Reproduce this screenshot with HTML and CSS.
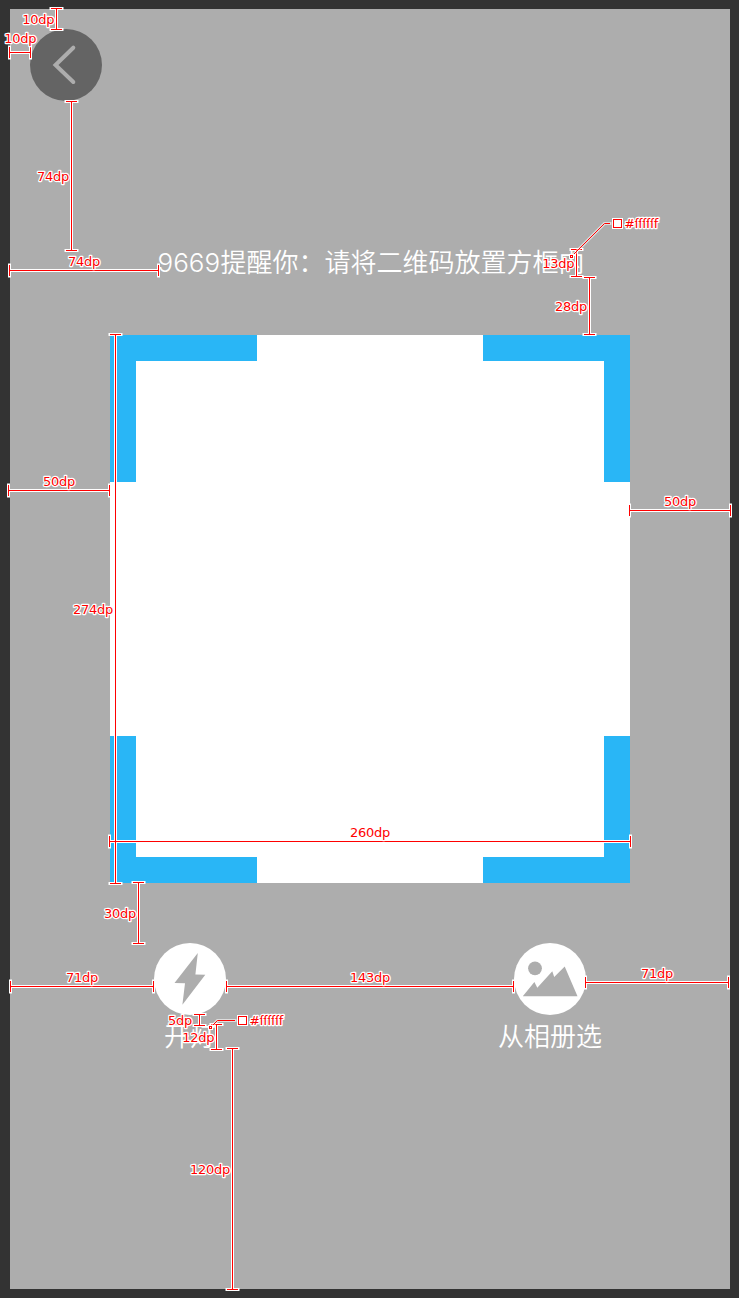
FILE: index.html
```html
<!DOCTYPE html>
<html lang="zh-CN">
<head>
<meta charset="utf-8">
<title>扫描二维码</title>
<link rel="stylesheet" href="styles.css">
</head>
<body>
<main class="phone">
  <button class="round back" aria-label="返回">
    <svg viewBox="0 0 72 72"><path class="chevron" d="M43.3 18.7 25.5 36 43.3 53"/></svg>
  </button>
  <h1 class="tip"><span class="digits">9669</span>提醒你：请将二维码放置方框内</h1>
  <section class="scanner">
    <i class="corner tl"></i><i class="corner tr"></i>
    <i class="corner bl"></i><i class="corner br"></i>
  </section>
  <nav class="actions">
    <div class="action">
      <button class="round light" aria-label="开灯">
        <svg viewBox="0 0 72 72"><path class="glyph" d="M43.8 10 41.4 31.4 51.3 31.7 28.4 61.7 31 40.3 20.5 40Z"/></svg>
      </button>
      <span>开灯</span>
    </div>
    <div class="action">
      <button class="round light" aria-label="从相册选">
        <svg viewBox="0 0 72 72"><circle class="glyph" cx="21" cy="25.3" r="6.9"/><path class="glyph" d="M8.8 53.2 20.4 39 23.3 44.8 38.3 28.3 40.2 34 50.7 23.4 63.5 53.2Z"/></svg>
      </button>
      <span>从相册选</span>
    </div>
  </nav>
</main>
<svg class="specs" viewBox="0 0 739 1298">
  <defs>
    <path id="rules" d="M56.5 8.5V29.5M51 8.5h11M51 29.5h11
      M9.5 52.5H30.5M9.5 47v11M30.5 47v11
      M71.5 101.5V250.5M66 101.5h11M66 250.5h11
      M9.5 270.5H158.5M9.5 265v11M158.5 265v11
      M576.5 249.5V276.5M571 249.5h11M571 276.5h11
      M589.5 277.5V334.5M584 277.5h11M584 334.5h11
      M115.5 334.5V883.5M110 334.5h11M110 883.5h11
      M8.5 490.5H109.5M8.5 485v11M109.5 485v11
      M629.5 510.5H730.5M629.5 505v11M730.5 505v11
      M109.5 841.5H630.5M109.5 836v11M630.5 836v11
      M138.5 882.5V943.5M133 882.5h11M133 943.5h11
      M10.5 986.5H153.5M10.5 981v11M153.5 981v11
      M226.5 986.5H513.5M226.5 981v11M513.5 981v11
      M585.5 982.5H728.5M585.5 977v11M728.5 977v11
      M199.5 1014.5V1025.5M194 1014.5h11M194 1025.5h11
      M216.5 1024.5V1049.5M211 1024.5h11M211 1049.5h11
      M232.5 1048.5V1289.5M227 1048.5h11M227 1289.5h11"/>
    <path id="leaders" d="M610 223.5H604.5L572.5 255.5M235 1020.5H217.5L211.5 1026.5"/>
  </defs>
  <use href="#rules" class="halo"/><use href="#rules" class="line"/>
  <use href="#leaders" class="halo soft"/><use href="#leaders" class="line"/>
  <g class="swatches">
    <rect x="613.5" y="219.5" width="8" height="8"/><rect x="570.5" y="255.5" width="2" height="2"/>
    <rect x="238.5" y="1016.5" width="8" height="8"/><rect x="209.5" y="1026.5" width="2" height="2"/>
  </g>
  <g class="labels">
    <text x="38.3" y="24">10dp</text><text x="20.3" y="43">10dp</text>
    <text x="53" y="181">74dp</text><text x="84" y="266">74dp</text>
    <text x="558.2" y="268">13dp</text><text x="571" y="311">28dp</text>
    <text x="93" y="614">274dp</text><text x="59" y="486">50dp</text>
    <text x="680" y="506">50dp</text><text x="370" y="837">260dp</text>
    <text x="120" y="918">30dp</text><text x="82" y="982">71dp</text>
    <text x="370" y="982">143dp</text><text x="657" y="978">71dp</text>
    <text x="180" y="1025">5dp</text><text x="198.2" y="1042">12dp</text>
    <text x="210.1" y="1174">120dp</text>
    <text x="641.2" y="228" textLength="34">#ffffff</text>
    <text x="266.2" y="1025" textLength="34">#ffffff</text>
  </g>
</svg>
</body>
</html>
```
FILE: styles.css
```css
* { box-sizing: border-box; }
body {
  margin: 0;
  width: 739px;
  height: 1298px;
  padding: 9px 9px 9px 10px;
  background: #333;
  position: relative;
  overflow: hidden;
  font-family: "Noto Sans CJK SC", sans-serif;
}
.phone {
  width: 720px;
  height: 1280px;
  padding-top: 20px;
  background: #adadad;
  display: flex;
  flex-direction: column;
}
.round {
  display: block;
  width: 72px;
  height: 72px;
  padding: 0;
  border: 0;
  border-radius: 50%;
}
.round svg { display: block; width: 72px; height: 72px; }
.back { margin-left: 20px; background: #646464; }
.chevron { fill: none; stroke: #adadad; stroke-width: 4; stroke-linecap: round; }
.light { background: #fff; }
.glyph { fill: #adadad; }
.tip {
  margin: 140px 0 0 147.5px;
  height: 40px;
  line-height: 40px;
  font-size: 26px;
  font-weight: 350;
  color: #fff;
  white-space: nowrap;
}
.digits {
  display: inline-block;
  width: 63px;
  font-family: Inter, "Liberation Sans", sans-serif;
  font-weight: 350;
}
.scanner {
  width: 520px;
  height: 548px;
  margin: 54px 0 0 100px;
  background: #fff;
  display: grid;
  grid-template-columns: 147.3px 147.3px;
  grid-template-rows: 147.4px 147.4px;
  place-content: space-between;
}
.corner { border: 0 solid #29b6f6; }
.tl { border-width: 26.3px 0 0 26.3px; }
.tr { border-width: 26.3px 26.3px 0 0; }
.bl { border-width: 0 0 26.3px 26.3px; }
.br { border-width: 0 26.3px 26.3px 0; }
.actions {
  display: flex;
  justify-content: space-between;
  padding: 0 128px;
  margin-top: 60px;
}
.action {
  display: flex;
  flex-direction: column;
  align-items: center;
  width: 104px;
  font-size: 26px;
  font-weight: 350;
  line-height: 40px;
  color: #fff;
}
.specs { position: absolute; left: 0; top: 0; width: 739px; height: 1298px; }
.halo { fill: none; stroke: #fff; stroke-width: 3; stroke-linecap: square; }
.soft { stroke-opacity: 0.6; }
.line { fill: none; stroke: #f00; stroke-width: 1; }
.swatches rect { fill: #fff; stroke: #f00; stroke-width: 1; outline: 1px solid #fff; }
.labels text {
  font: 13px "DejaVu Sans", sans-serif;
  letter-spacing: -0.25px;
  text-anchor: middle;
  fill: #f00;
  stroke: #fff;
  stroke-width: 2.4px;
  stroke-linejoin: round;
  paint-order: stroke;
}
```
